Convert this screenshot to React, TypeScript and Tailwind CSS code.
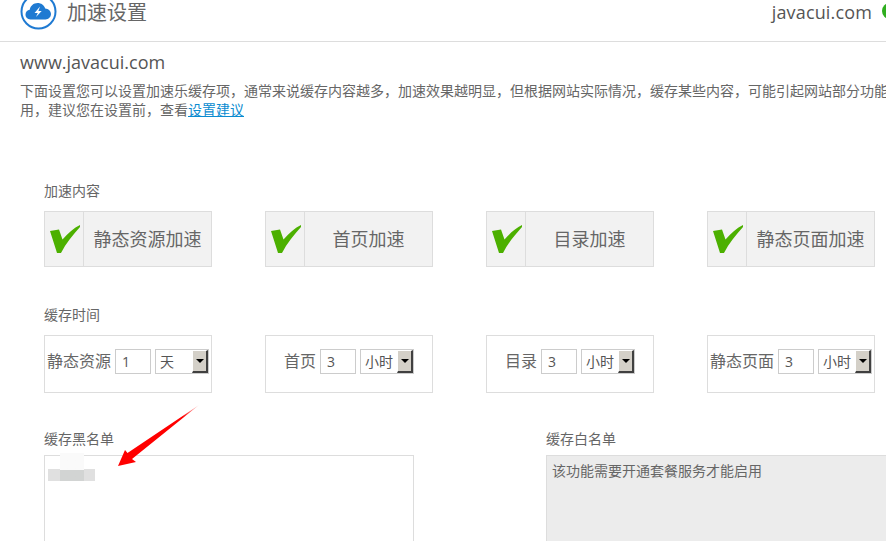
const cjk = "font-['Open_Sans','Noto_Sans_CJK_SC',sans-serif]";

const speedItems = ["静态资源加速", "首页加速", "目录加速", "静态页面加速"];

const timeItems = [
  { label: "静态资源", value: "1", unit: "天" },
  { label: "首页", value: "3", unit: "小时" },
  { label: "目录", value: "3", unit: "小时" },
  { label: "静态页面", value: "3", unit: "小时" },
];

function Logo() {
  return (
    <svg width="37" height="37" viewBox="0 0 37 37" className="shrink-0">
      <circle cx="18.5" cy="18.5" r="17" fill="none" stroke="#1f7ad2" strokeWidth="2" />
      <path
        d="M10.5 26.5c-3 0-5-2.200-5-4.900 0-2.500 1.800-4.500 4.200-4.800 .6-3.900 3.900-6.800 7.900-6.800 3.500 0 6.500 2.200 7.600 5.400 3.200.1 5.800 2.700 5.800 5.700 0 3.100-2.500 5.400-5.500 5.400z"
        fill="#1f7ad2"
      />
      <path d="M20 13.500l-5.500 6.500h3.300l-1.800 4 5.700-6h-3.300z" fill="#fff" />
    </svg>
  );
}

function Check() {
  return (
    <svg width="30" height="28" viewBox="0 0 30 28">
      <path d="M0 6L9 4.500 12.500 14.500C18 8 24 3 30 0V2C23 10 16 18 11 28H7z" fill="#4cb000" />
    </svg>
  );
}

function SpeedCard({ label }: { label: string }) {
  return (
    <div className="flex h-[56px] border border-[#dddddd] bg-[#f2f2f2]">
      <div className="flex w-[39px] shrink-0 items-center justify-center border-r border-[#dddddd] pl-[1px]">
        <Check />
      </div>
      <div className="flex flex-1 items-center justify-center text-[18px] text-[#666666]">{label}</div>
    </div>
  );
}

function FakeSelect({ unit }: { unit: string }) {
  return (
    <div className="flex h-[25px] w-[54px] border border-[#cccccc] bg-white">
      <span className="flex-1 pl-[4px] text-[14px] leading-[23px] text-[#555555]">{unit}</span>
      <span className="flex w-[16px] items-center justify-center border-t border-l border-white border-r-2 border-b-2 border-r-[#404040] border-b-[#404040] bg-[#d4d0c8]">
        <span className="border-x-[4px] border-t-[4px] border-x-transparent border-t-black" />
      </span>
    </div>
  );
}

function TimeCard({ label, value, unit }: { label: string; value: string; unit: string }) {
  return (
    <div className="flex h-[58px] justify-center gap-[4px] border border-[#dddddd] pt-[13px]">
      <span className="whitespace-nowrap text-[16px] leading-[25px] text-[#666666]">{label}</span>
      <input
        readOnly
        value={value}
        className="h-[25px] w-[36px] border border-[#cccccc] bg-white pl-[6px] text-[14px] text-[#555555] outline-none"
      />
      <FakeSelect unit={unit} />
    </div>
  );
}

function Arrow() {
  return (
    <svg width="90" height="70" viewBox="0 0 90 70" className="pointer-events-none absolute left-[114px] top-[401px]">
      <defs>
        <linearGradient id="tail" x1="100%" y1="0%" x2="0%" y2="100%">
          <stop offset="0%" stopColor="#ff0000" stopOpacity="0.15" />
          <stop offset="20%" stopColor="#ff0000" />
          <stop offset="100%" stopColor="#ff0000" />
        </linearGradient>
      </defs>
      <path d="M85 4 L18 58 L22 61 L4 65 L11 49 L13.500 52 Z" fill="url(#tail)" />
    </svg>
  );
}

export default function App() {
  return (
    <div className={`relative h-[541px] w-[886px] overflow-hidden bg-white text-[#666666] ${cjk}`}>
      <header className="flex h-[42px] items-start border-b border-[#dddddd] pl-[20px]">
        <div className="-mt-[7px]">
          <Logo />
        </div>
        <h1 className="ml-[10px] text-[20px] leading-[26px] text-[#666666]">加速设置</h1>
        <span className="ml-auto text-[18px] leading-[24px] tracking-[0.15px] text-[#555555]">javacui.com</span>
        <span className="ml-[10px] -mr-[12px] mt-[3px] size-[16px] rounded-full bg-[#2fae1f]" />
      </header>

      <div className="pl-[20px] pt-[7px]">
        <p className="text-[18px] leading-[26px] text-[#555555]">www.javacui.com</p>
        <p className="mt-[6px] whitespace-nowrap text-[14px] leading-[19px]">
          下面设置您可以设置加速乐缓存项，通常来说缓存内容越多，加速效果越明显，但根据网站实际情况，缓存某些内容，可能引起网站部分功能
        </p>
        <p className="whitespace-nowrap text-[14px] leading-[19px]">
          用，建议您在设置前，查看
          <a className="text-[#0a8bd0] underline">设置建议</a>
        </p>
      </div>

      <section className="pl-[44px] pt-[62px]">
        <h2 className="text-[14px] leading-[20px]">加速内容</h2>
        <div className="mt-[10px] grid w-[831px] grid-cols-4 gap-x-[53px]">
          {speedItems.map((s) => (
            <SpeedCard key={s} label={s} />
          ))}
        </div>

        <h2 className="mt-[38px] text-[14px] leading-[20px]">缓存时间</h2>
        <div className="mt-[10px] grid w-[831px] grid-cols-4 gap-x-[53px]">
          {timeItems.map((t) => (
            <TimeCard key={t.label} label={t.label} value={t.value} unit={t.unit} />
          ))}
        </div>

        <div className="mt-[36px] flex">
          <div className="w-[370px] shrink-0">
            <h2 className="text-[14px] leading-[20px]">缓存黑名单</h2>
            <div className="relative mt-[6px] h-[120px] border border-[#dddddd] pl-[3px] pt-[13px]">
              <div className="h-[12px] w-[47px] bg-[#e0e0e0] blur-[0.5px]" />
              <div className="absolute left-[15px] top-[-3px] h-[28px] w-[24px] bg-gradient-to-b from-[#fafafa] from-60% to-[#d2d4d3] to-60% blur-[0.5px]" />
            </div>
          </div>
          <div className="ml-[132px] w-[400px] shrink-0">
            <h2 className="text-[14px] leading-[20px]">缓存白名单</h2>
            <div className="mt-[6px] h-[120px] border border-[#dddddd] bg-[#ececec] pl-[5px] pt-[5px] text-[14px] leading-[20px] text-[#666666]">
              该功能需要开通套餐服务才能启用
            </div>
          </div>
        </div>
      </section>

      <Arrow />
    </div>
  );
}
